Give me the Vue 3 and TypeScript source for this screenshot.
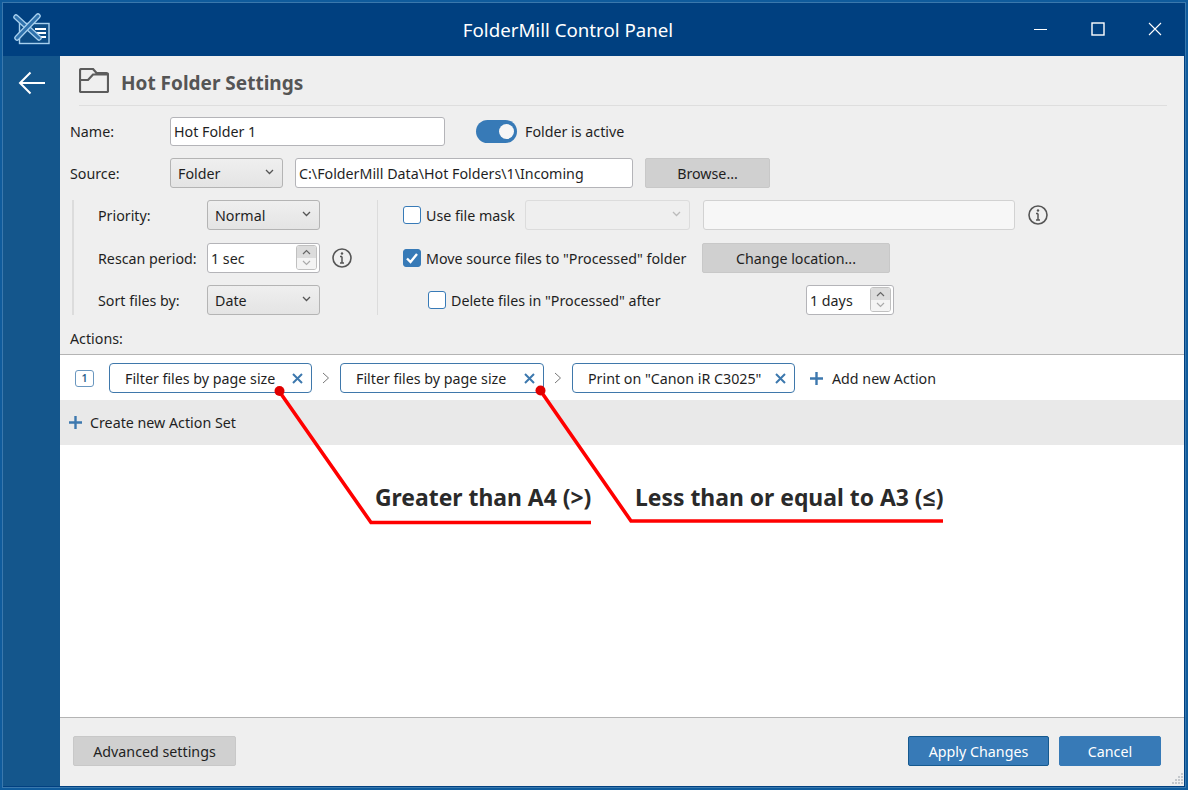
<script setup lang="ts">
const chips = [
  { label: 'Filter files by page size', w: 203 },
  { label: 'Filter files by page size', w: 204 },
  { label: 'Print on "Canon iR C3025"', w: 223 },
]
</script>

<template>
  <div class="window">
    <header class="titlebar">
      <div class="logo">
        <svg width="36" height="32" viewBox="0 0 36 32" fill="none">
          <rect x="6.500" y="8.500" width="29.500" height="20" fill="#0d4c85" stroke="#a8d0ee" stroke-width="1.400" />
          <path d="M22 14h11M22 18h11M22 22h11" stroke="#fff" stroke-width="2" />
          <path d="M3 2L26 23" stroke="#a8d0ee" stroke-width="5.500" stroke-linecap="round" />
          <path d="M3 2L26 23" stroke="#2f72ad" stroke-width="3" stroke-linecap="round" />
          <path d="M25 1L4 23" stroke="#a8d0ee" stroke-width="5.500" stroke-linecap="round" />
          <path d="M25 1L4 23" stroke="#2f72ad" stroke-width="3" stroke-linecap="round" />
        </svg>
      </div>
      <div class="wintitle">FolderMill Control Panel</div>
      <div class="winbtns">
        <div class="winbtn"><svg width="14" height="14" viewBox="0 0 14 14"><path d="M0 7.500h13" stroke="#fff" /></svg></div>
        <div class="winbtn"><svg width="14" height="14" viewBox="0 0 14 14"><rect x="1" y="1" width="12" height="12" fill="none" stroke="#fff" stroke-width="1.400" /></svg></div>
        <div class="winbtn"><svg width="14" height="14" viewBox="0 0 14 14"><path d="M1 1l12 12M13 1L1 13" stroke="#fff" stroke-width="1.100" /></svg></div>
      </div>
    </header>
    <div class="body">
      <aside class="sidebar">
        <svg width="28" height="24" viewBox="0 0 28 24" fill="none">
          <path d="M27 12H2M12.500 1.500L2 12l10.500 10.500" stroke="#fff" stroke-width="2" />
        </svg>
      </aside>
      <main class="main">
        <section class="form">
          <div class="heading">
            <svg width="30" height="25" viewBox="0 0 30 25" fill="none">
              <path d="M1 23V2.500A1.500 1.500 0 0 1 2.500 1H14l3.500 4h10A1.500 1.500 0 0 1 29 6.500V23a1 1 0 0 1-1 1H2a1 1 0 0 1-1-1zM1 12h8l5-5.500h15" stroke="#5c5c5c" stroke-width="2.200" />
            </svg>
            <h1>Hot Folder Settings</h1>
          </div>

          <div class="row name-row">
            <label class="lbl">Name:</label>
            <div class="input name-input">Hot Folder 1</div>
            <div class="toggle"><span class="knob"></span></div>
            <span>Folder is active</span>
          </div>

          <div class="row source-row">
            <label class="lbl">Source:</label>
            <div class="select source-select">Folder<svg class="caret" width="9" height="6" viewBox="0 0 9 6" fill="none"><path d="M1 1l3.500 3.500L8 1" stroke="#555" stroke-width="1.300" /></svg></div>
            <div class="input path-input">C:\FolderMill Data\Hot Folders\1\Incoming</div>
            <button class="btn browse">Browse...</button>
          </div>

          <div class="group">
            <div class="col-left">
              <div class="grow">
                <span class="glabel">Priority:</span>
                <div class="select wide">Normal<svg class="caret" width="9" height="6" viewBox="0 0 9 6" fill="none"><path d="M1 1l3.500 3.500L8 1" stroke="#555" stroke-width="1.300" /></svg></div>
              </div>
              <div class="grow">
                <span class="glabel">Rescan period:</span>
                <div class="spin wide">
                  1 sec
                  <div class="spinbtns">
                    <span class="up"><svg width="9" height="6" viewBox="0 0 9 6" fill="none"><path d="M1 5l3.500-3.500L8 5" stroke="#666" stroke-width="1.200" /></svg></span>
                    <span class="down"><svg width="9" height="6" viewBox="0 0 9 6" fill="none"><path d="M1 1l3.500 3.500L8 1" stroke="#aaa" stroke-width="1.200" /></svg></span>
                  </div>
                </div>
                <svg class="info" width="20" height="20" viewBox="0 0 20 20" fill="none">
                  <circle cx="10" cy="10" r="9" stroke="#555" stroke-width="1.600" />
                  <path d="M10 8.500V15M8 8.500h2M8 15h4" stroke="#555" stroke-width="1.500" />
                  <circle cx="10" cy="5.500" r="1.200" fill="#555" />
                </svg>
              </div>
              <div class="grow">
                <span class="glabel">Sort files by:</span>
                <div class="select wide">Date<svg class="caret" width="9" height="6" viewBox="0 0 9 6" fill="none"><path d="M1 1l3.500 3.500L8 1" stroke="#555" stroke-width="1.300" /></svg></div>
              </div>
            </div>
            <div class="col-right">
              <div class="rrow">
                <span class="check"></span>
                <span class="mask-label">Use file mask</span>
                <div class="select disabled mask-select"><svg class="caret" width="9" height="6" viewBox="0 0 9 6" fill="none"><path d="M1 1l3.500 3.500L8 1" stroke="#bbb" stroke-width="1.300" /></svg></div>
                <div class="input disabled mask-input"></div>
                <svg class="info" width="20" height="20" viewBox="0 0 20 20" fill="none">
                  <circle cx="10" cy="10" r="9" stroke="#555" stroke-width="1.600" />
                  <path d="M10 8.500V15M8 8.500h2M8 15h4" stroke="#555" stroke-width="1.500" />
                  <circle cx="10" cy="5.500" r="1.200" fill="#555" />
                </svg>
              </div>
              <div class="rrow">
                <span class="check on"><svg width="14" height="12" viewBox="0 0 14 12" fill="none"><path d="M2 6.500l3.500 3.500L12 2" stroke="#fff" stroke-width="2.400" /></svg></span>
                <span class="move-label">Move source files to "Processed" folder</span>
                <button class="btn change">Change location...</button>
              </div>
              <div class="rrow indent">
                <span class="check"></span>
                <span class="del-label">Delete files in "Processed" after</span>
                <div class="spin days">
                  1 days
                  <div class="spinbtns">
                    <span class="up"><svg width="9" height="6" viewBox="0 0 9 6" fill="none"><path d="M1 5l3.500-3.500L8 5" stroke="#666" stroke-width="1.200" /></svg></span>
                    <span class="down"><svg width="9" height="6" viewBox="0 0 9 6" fill="none"><path d="M1 1l3.500 3.500L8 1" stroke="#aaa" stroke-width="1.200" /></svg></span>
                  </div>
                </div>
              </div>
            </div>
          </div>

          <div class="actions-label">Actions:</div>
        </section>

        <section class="canvas">
          <div class="actionset">
            <span class="setnum">1</span>
            <template v-for="(c, i) in chips" :key="i">
              <svg v-if="i > 0" class="chev" width="8" height="12" viewBox="0 0 8 12" fill="none"><path d="M1 1l5.500 5L1 11" stroke="#777" /></svg>
              <div class="chip" :style="{ width: c.w + 'px' }">
                <span>{{ c.label }}</span>
                <svg width="11" height="11" viewBox="0 0 11 11" fill="none"><path d="M1 1l9 9M10 1l-9 9" stroke="#3d78ae" stroke-width="2" /></svg>
              </div>
            </template>
            <svg class="plus" width="13" height="13" viewBox="0 0 13 13"><path d="M6.500 0v13M0 6.500h13" stroke="#3d78ae" stroke-width="2.400" /></svg>
            <span>Add new Action</span>
          </div>
          <div class="newset">
            <svg class="plus" width="13" height="13" viewBox="0 0 13 13"><path d="M6.500 0v13M0 6.500h13" stroke="#3d78ae" stroke-width="2.400" /></svg>
            <span>Create new Action Set</span>
          </div>
          <div class="blank"></div>
        </section>

        <footer class="footer">
          <button class="btn advanced">Advanced settings</button>
          <div class="spacer"></div>
          <button class="btn primary apply">Apply Changes</button>
          <button class="btn primary cancel">Cancel</button>
          <svg class="grip" width="14" height="14" viewBox="0 0 14 14" fill="#c4c8cc">
            <rect x="11" y="1" width="2" height="2" /><rect x="11" y="4" width="2" height="2" /><rect x="8" y="4" width="2" height="2" />
            <rect x="11" y="7" width="2" height="2" /><rect x="8" y="7" width="2" height="2" /><rect x="5" y="7" width="2" height="2" />
            <rect x="11" y="10" width="2" height="2" /><rect x="8" y="10" width="2" height="2" /><rect x="5" y="10" width="2" height="2" /><rect x="2" y="10" width="2" height="2" />
          </svg>
        </footer>
      </main>
    </div>

    <svg class="annot" width="1188" height="790" viewBox="0 0 1188 790" fill="none">
      <path d="M279 391L371 522.500H591" stroke="#f00" stroke-width="3.600" />
      <path d="M540 390L631 521H943" stroke="#f00" stroke-width="3.600" />
      <circle cx="279.500" cy="391" r="5" fill="#e00000" />
      <circle cx="540.500" cy="390.500" r="5" fill="#e00000" />
    </svg>
    <div class="note note-a">Greater than A4 (&gt;)</div>
    <div class="note note-b">Less than or equal to A3 (≤)</div>
  </div>
</template>

<style>
html, body { margin: 0; padding: 0; background: #004080; }
</style>

<style scoped>
.window {
  position: relative;
  box-sizing: border-box;
  width: 1188px;
  height: 790px;
  overflow: hidden;
  display: flex;
  flex-direction: column;
  border: 3px solid #0f5b9c;
  outline: 1px solid #3a78ad;
  outline-offset: -3px;
  background: #004080;
  font-family: "Noto Sans", "Open Sans", sans-serif;
  font-size: 14.250px;
  color: #1f1f1f;
}
.titlebar {
  flex: 0 0 53px;
  display: flex;
  align-items: center;
  background: #004080;
}
.logo { width: 121px; padding: 3px 0 0 10px; box-sizing: border-box; }
.logo svg { display: block; overflow: visible; }
.wintitle { flex: 1; text-align: center; font-size: 18.700px; color: #fff; }
.winbtns { display: flex; padding: 0 2px 2px 0; }
.winbtn { width: 57px; display: flex; justify-content: center; }
.body { flex: 1; display: flex; min-height: 0; margin-bottom: 1px; }
.sidebar {
  width: 57px;
  flex: none;
  background: #14568c;
  display: flex;
  justify-content: center;
  padding-top: 15px;
  box-sizing: border-box;
  align-items: flex-start;
}
.main {
  flex: 1;
  display: flex;
  flex-direction: column;
  min-width: 0;
  background: #efefef;
  margin-right: 1px;
}
.form { padding: 0 0 0 10px; }
.heading {
  display: flex;
  align-items: center;
  gap: 12px;
  height: 49px;
  margin: 0 17px 0 9px;
  border-bottom: 1px solid #dedede;
}
.heading h1 { margin: 4px 0 0; font-size: 19px; font-weight: 700; color: #555; }
.row { display: flex; align-items: center; }
.name-row { margin-top: 11px; height: 29px; }
.source-row { margin-top: 12px; height: 30px; }
.lbl { width: 100px; flex: none; }
.input {
  box-sizing: border-box;
  height: 100%;
  display: flex;
  align-items: center;
  padding-left: 3px;
  background: #fff;
  border: 1px solid #b4b4b8;
  border-radius: 3px;
}
.input.disabled { background: #f7f7f7; border-color: #d2d2d2; }
.name-input { width: 275px; height: 29px; }
.toggle {
  width: 41px;
  height: 23px;
  margin: 0 8px 0 31px;
  border-radius: 12px;
  background: #377ab7;
  position: relative;
}
.knob {
  position: absolute;
  right: 3px;
  top: 4px;
  width: 15px;
  height: 15px;
  border-radius: 50%;
  background: #f6f6f6;
}
.select {
  position: relative;
  box-sizing: border-box;
  height: 30px;
  display: flex;
  align-items: center;
  padding-left: 7px;
  border: 1px solid #b4b4b4;
  border-radius: 3px;
  background: linear-gradient(#efefef, #e4e4e4);
}
.select.disabled { background: #efefef; border-color: #dcdcdc; }
.caret { position: absolute; right: 8px; top: 10px; }
.source-select { width: 113px; }
.path-input { width: 338px; height: 30px; margin-left: 12px; }
.btn {
  box-sizing: border-box;
  font: inherit;
  color: inherit;
  height: 30px;
  padding: 0;
  background: #d0d0d0;
  border: 1px solid #c8c8c8;
  border-radius: 2px;
}
.browse { width: 125px; margin-left: 12px; }
.group { display: flex; margin: 12px 0 0 2px; height: 115px; }
.col-left {
  width: 306px;
  box-sizing: border-box;
  border-left: 2px solid #dcdcdc;
  border-right: 1px solid #dcdcdc;
  padding-left: 24px;
}
.grow { display: flex; align-items: center; height: 30px; }
.grow:nth-child(2), .rrow:nth-child(2) { margin-top: 13px; }
.grow:nth-child(3), .rrow:nth-child(3) { margin-top: 12px; }
.glabel { width: 109px; flex: none; }
.wide { width: 113px; }
.spin {
  position: relative;
  box-sizing: border-box;
  height: 30px;
  display: flex;
  align-items: center;
  padding-left: 3px;
  background: #fff;
  border: 1px solid #b4b4b8;
  border-radius: 3px;
}
.spinbtns {
  position: absolute;
  right: 2px;
  top: 1px;
  bottom: 2px;
  width: 21px;
  box-sizing: border-box;
  display: flex;
  flex-direction: column;
  border: 1px solid #c0c0c0;
  border-radius: 3px;
  overflow: hidden;
}
.spinbtns span { flex: 1; display: flex; align-items: center; justify-content: center; }
.up { background: #dcdcdc; }
.down { background: #f4f4f4; }
.info { margin-left: 12px; flex: none; }
.col-right { flex: 1; padding-left: 25px; }
.rrow { display: flex; align-items: center; height: 30px; }
.rrow.indent { padding-left: 25px; }
.check {
  box-sizing: border-box;
  width: 18px;
  height: 18px;
  flex: none;
  margin-right: 5px;
  background: #fff;
  border: 1px solid #377ab7;
  border-radius: 3px;
  display: flex;
  align-items: center;
  justify-content: center;
}
.check.on { background: #377ab7; }
.mask-label { width: 99px; flex: none; }
.mask-select { width: 165px; }
.mask-input { width: 312px; height: 30px; margin-left: 13px; }
.col-right .info { margin-left: 13px; }
.move-label { width: 276px; flex: none; white-space: nowrap; }
.change { width: 188px; }
.del-label { width: 355px; flex: none; }
.days { width: 88px; }
.actions-label { margin-top: 14px; height: 25px; line-height: 20px; }
.canvas { flex: 1; display: flex; flex-direction: column; background: #fff; border-top: 1px solid #b4b4b4; }
.actionset { box-sizing: border-box; height: 45px; padding: 1px 0 0 15px; display: flex; align-items: center; flex: none; }
.setnum {
  box-sizing: border-box;
  width: 19px;
  height: 17px;
  margin-right: 15px;
  border: 1px solid #6a97bf;
  border-radius: 3px;
  font-size: 10.500px;
  font-weight: 600;
  line-height: 15px;
  text-align: center;
  color: #2d5f8c;
}
.chip {
  box-sizing: border-box;
  height: 30px;
  display: flex;
  align-items: center;
  justify-content: space-between;
  padding: 0 8px 0 15px;
  background: #fff;
  border: 1px solid #3f78ab;
  border-radius: 4px;
  white-space: nowrap;
}
.chev { margin: 0 10px; }
.plus { flex: none; margin: 0 9px 0 15px; }
.newset { height: 45px; flex: none; display: flex; align-items: center; background: #e9e9e9; }
.newset .plus { margin: 0 8px 0 9px; }
.blank { flex: 1; }
.footer {
  position: relative;
  flex: 0 0 69px;
  box-sizing: border-box;
  border-top: 1px solid #b4b4b4;
  display: flex;
  align-items: center;
  padding: 0 23px 2px 13px;
}
.advanced { width: 163px; }
.spacer { flex: 1; }
.primary { background: #377ab7; border-color: #377ab7; color: #fff; }
.apply { width: 141px; border-color: #15598f; margin-right: 10px; }
.cancel { width: 102px; }
.grip { position: absolute; right: 0; bottom: 0; }
.annot { position: absolute; left: -3px; top: -3px; pointer-events: none; }
.note {
  position: absolute;
  font-size: 22.900px;
  font-weight: 700;
  color: #2a2a2a;
  white-space: nowrap;
  line-height: 30px;
}
.note-a { left: 372px; top: 480px; }
.note-b { left: 632px; top: 480px; }
</style>
